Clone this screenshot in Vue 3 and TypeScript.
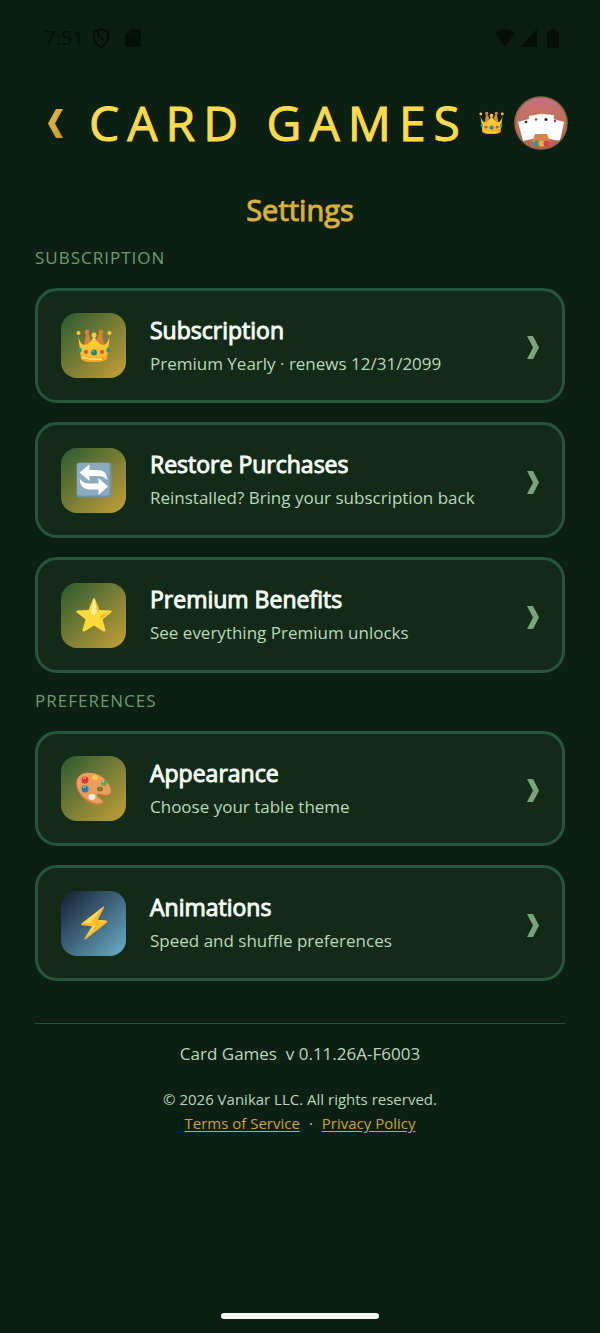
<script setup lang="ts">
interface SettingRow {
  icon: 'crown' | 'restore' | 'star' | 'palette' | 'bolt'
  title: string
  detail: string
}

interface SettingGroup {
  label: string
  rows: SettingRow[]
}

const groups: SettingGroup[] = [
  {
    label: 'SUBSCRIPTION',
    rows: [
      { icon: 'crown', title: 'Subscription', detail: 'Premium Yearly · renews 12/31/2099' },
      { icon: 'restore', title: 'Restore Purchases', detail: 'Reinstalled? Bring your subscription back' },
      { icon: 'star', title: 'Premium Benefits', detail: 'See everything Premium unlocks' },
    ],
  },
  {
    label: 'PREFERENCES',
    rows: [
      { icon: 'palette', title: 'Appearance', detail: 'Choose your table theme' },
      { icon: 'bolt', title: 'Animations', detail: 'Speed and shuffle preferences' },
    ],
  },
]
</script>

<template>
  <div class="page">
    <svg class="defs" width="0" height="0" aria-hidden="true">
      <defs>
        <linearGradient id="gold" x1="0" y1="0" x2="0" y2="1">
          <stop offset="0" stop-color="#ffd43a" />
          <stop offset="1" stop-color="#f8b52c" />
        </linearGradient>
        <linearGradient id="backGold" x1="0" y1="0" x2="1" y2="1">
          <stop offset="0" stop-color="#e5bd45" />
          <stop offset="1" stop-color="#c79a2c" />
        </linearGradient>
        <linearGradient id="avatarBg" x1="0" y1="0" x2="0" y2="1">
          <stop offset="0" stop-color="#c66f86" />
          <stop offset="0.4" stop-color="#c5705f" />
          <stop offset="1" stop-color="#b9664f" />
        </linearGradient>
        <clipPath id="avatarClip"><circle cx="27" cy="27" r="26" /></clipPath>
        <symbol id="crown" viewBox="0 0 36 34">
          <path d="M7 22 L10 5 L13 5 L17 20 L23 5 L26 5 L29 22Z" fill="#d9823c" />
          <circle cx="11" cy="3" r="2.3" fill="#d9823c" />
          <circle cx="25" cy="3" r="2.3" fill="#d9823c" />
          <path d="M2 5.500 C3 12 6 16 9 16 C13 15 17 11 17 7 H19 C19 11 23 15 27 16 C30 16 33 12 34 5.500 L31 29 Q30 33 18 33 Q6 33 5 29Z" fill="url(#gold)" />
          <path d="M5 26 Q18 31 31 26 L31 30 Q27 33 18 33 Q8 33 5 30Z" fill="#f4a92d" />
          <path d="M6 28 Q14 31 26 30" fill="none" stroke="#ffe56e" stroke-width="1.500" />
          <circle cx="2.500" cy="4" r="2" fill="#ffc940" />
          <circle cx="18" cy="6" r="2.500" fill="#ffc940" />
          <circle cx="33.500" cy="4" r="2" fill="#ffc940" />
          <ellipse cx="4" cy="21" rx="1.700" ry="2.500" fill="#199c8c" />
          <ellipse cx="32" cy="21" rx="1.700" ry="2.500" fill="#199c8c" />
          <circle cx="10" cy="23" r="2" fill="#e64c3c" />
          <circle cx="26" cy="23" r="2" fill="#e64c3c" />
          <circle cx="18" cy="23.500" r="3" fill="#128c80" />
          <circle cx="17" cy="22.500" r="1" fill="#50c4ad" />
        </symbol>
        <symbol id="restore" viewBox="0 0 36 36">
          <rect x="0.500" y="0.500" width="35" height="35" rx="3" fill="#6e93ac" />
          <rect x="1" y="1" width="32.500" height="32.500" rx="2.500" fill="#8aaabd" />
          <path d="M3.500 10.500 L13.500 2.500 V8 H22 Q31 8 31 18 Q28 14 22 14 H13.500 V19Z" fill="#fff" />
          <path d="M3.500 16.500 Q7 21.500 13 21.500 H22.500 V16 L32 24.500 L22.500 33 V27.500 H13 Q4 27 3.500 16.500Z" fill="#fff" />
        </symbol>
        <symbol id="star" viewBox="0 0 36 34">
          <path d="M17 1 Q18 -0.500 19 1 L23.500 12 L34.500 12.500 Q36.500 13 35 14.500 L26.500 21.500 L29.500 32 Q29.500 34 27.500 33.500 L18 27.500 L8.500 33.500 Q6.500 34 6.500 32 L9.500 21.500 L1 14.500 Q-0.500 13 1.500 12.500 L12.500 12Z" fill="#fddb3a" />
          <path d="M18 1 L22 13 L18 18 L15 14Z" fill="#fff394" />
          <path d="M19 1.500 L23 13 L21 14Z M34 13 L25 21 L24 18Z" fill="#f1b72b" />
        </symbol>
        <symbol id="palette" viewBox="0 0 36 34">
          <path d="M1 9 C3 -1 17 -1 26 5 C35 11 38 22 32 24 C29 26 25 22 22 23 C19 25 27 28 27 31 C25 35 15 33 9 28 C3 22 -1 16 1 9Z" fill="#c97938" />
          <path d="M1 8 C4 -1 17 -1 26 5 C34 11 38 21 32 22.500 C28 24 24 20 21 22 C19 25 27 27 27 30 C24 33 15 31 9 26 C3 21 0 15 1 8Z" fill="#eb9e5d" />
          <ellipse cx="24" cy="17" rx="3" ry="2.500" fill="#7e7931" />
          <circle cx="9" cy="8" r="3.500" fill="#dc3935" />
          <ellipse cx="19" cy="5.500" rx="3.200" ry="2.500" fill="#fccc3c" />
          <circle cx="28" cy="11" r="3" fill="#63a944" />
          <circle cx="9" cy="17" r="3.500" fill="#287bb9" />
          <ellipse cx="16" cy="25" rx="3.500" ry="3" fill="#f1eee8" />
          <path d="M7 7 Q8 5 10 6 M7 16 Q8 14 10 15 M26 10 L28 9" fill="none" stroke="#fff" stroke-opacity="0.700" />
        </symbol>
        <symbol id="bolt" viewBox="-1 -1 32 38">
          <path d="M24.500 1 Q26 -0.500 25.500 2 L19 14.500 L28 15.500 Q30 16 28 18 L6.500 35 Q4 37 5.500 33.500 L13 21.500 L2.500 20.500 Q0.500 20 2.500 18Z" fill="#fdbc2c" />
          <path d="M24.500 1 L3 18 L16 18 L12 17Z M19 15 L28 15.500 L24 17Z" fill="#ffdc59" />
          <path d="M5.500 34 L14 21 L16 21Z" fill="#ffe27a" />
        </symbol>
      </defs>
    </svg>

    <div class="status">
      <div class="status-group">
        <span class="clock">7:51</span>
        <svg width="18" height="20" viewBox="0 0 18 20" aria-hidden="true">
          <path d="M9 1 L16 3.500 V9 Q16 16 9 19 Q2 16 2 9 V3.500Z M6 3 V7 L13 13" fill="none" stroke="currentColor" stroke-width="2" />
        </svg>
        <svg class="sd" width="16" height="18" viewBox="0 0 16 18" aria-hidden="true">
          <path d="M6 0 H14 Q16 0 16 2 V16 Q16 18 14 18 H2 Q0 18 0 16 V6Z" fill="currentColor" />
          <path d="M6 3 V6 M9 3 V6 M12 3 V6" stroke="#0b1f13" />
        </svg>
      </div>
      <div class="status-group right">
        <svg width="20" height="18" viewBox="0 0 20 18" aria-hidden="true"><path d="M0 4 Q10 -4 20 4 L10 18Z" fill="currentColor" /></svg>
        <svg width="17" height="18" viewBox="0 0 17 18" aria-hidden="true"><path d="M17 0 V18 H0Z" fill="currentColor" /></svg>
        <svg class="battery" width="12" height="19" viewBox="0 0 12 19" aria-hidden="true"><path d="M3 0 H9 V2 Q12 2 12 4 V17 Q12 19 10 19 H2 Q0 19 0 17 V4 Q0 2 3 2Z" fill="currentColor" /></svg>
      </div>
    </div>

    <header class="top">
      <button class="back" type="button" aria-label="Back">
        <svg width="15" height="29" viewBox="0 0 15 29" aria-hidden="true">
          <path d="M8 0 H15 L7 14.500 L15 29 H8 L0 14.500Z" fill="url(#backGold)" />
        </svg>
      </button>
      <h1>CARD GAMES</h1>
      <svg class="top-crown" width="25" height="24" aria-hidden="true"><use href="#crown" /></svg>
      <button class="avatar" type="button" aria-label="Profile">
        <svg width="54" height="54" viewBox="0 0 54 54" aria-hidden="true">
          <g clip-path="url(#avatarClip)">
            <rect width="54" height="54" fill="url(#avatarBg)" />
            <path d="M14 22 Q27 10 40 22Z" fill="#c77d50" />
            <path d="M4 26 L18 22 L23 42 L9 45Z" fill="#fff" />
            <path d="M50 26 L36 22 L31 42 L46 45Z" fill="#fff" />
            <path d="M15 20 L27 18 L29 38 L17 40Z" fill="#fff" />
            <path d="M27 18 L40 19 L38 39 L26 38Z" fill="#fff" />
            <path d="M21 38 H33 L36 46 H18Z" fill="#d58348" />
            <circle cx="12" cy="26" r="1.300" fill="#231e22" />
            <circle cx="22" cy="23.500" r="1.200" fill="#c6283f" />
            <circle cx="32" cy="23.500" r="1.500" fill="#231e22" />
            <circle cx="41" cy="25" r="1.200" fill="#c6283f" />
            <path d="M19 54 L22 48 L25 54 L28 48 L31 54 L33 48 L37 54Z" fill="#d65245" />
            <circle cx="22.500" cy="47.500" r="3" fill="#3a9a89" />
            <circle cx="27.500" cy="47.500" r="3" fill="#f0b529" />
            <circle cx="32.500" cy="47.500" r="3" fill="#df3769" />
          </g>
          <circle cx="27" cy="27" r="26" fill="none" stroke="#8b6a48" stroke-width="1.500" />
        </svg>
      </button>
    </header>

    <main>
      <h2>Settings</h2>
      <section v-for="group in groups" :key="group.label">
        <h3>{{ group.label }}</h3>
        <div class="rows">
          <button v-for="row in group.rows" :key="row.title" class="row" type="button">
            <span class="tile" :class="row.icon">
              <svg width="36" height="36" aria-hidden="true"><use :href="'#' + row.icon" /></svg>
            </span>
            <span class="words">
              <span class="title">{{ row.title }}</span>
              <span class="detail">{{ row.detail }}</span>
            </span>
            <svg class="chevron" width="12" height="23" viewBox="0 0 12 23" aria-hidden="true">
              <path d="M0 0 H6 L12 11.500 L6 23 H0 L6 11.500Z" fill="#77a679" />
            </svg>
          </button>
        </div>
      </section>
    </main>

    <footer>
      <p class="version">Card Games&nbsp; v 0.11.26A-F6003</p>
      <p class="legal">© 2026 Vanikar LLC. All rights reserved.</p>
      <p class="legal"><a href="#terms">Terms of Service</a><span class="dot">·</span><a href="#privacy">Privacy Policy</a></p>
    </footer>

    <div class="home-bar"></div>
  </div>
</template>

<style>
body {
  margin: 0;
  background: #0b1f13;
}
</style>

<style scoped>
.page {
  box-sizing: border-box;
  display: flex;
  flex-direction: column;
  min-height: 100vh;
  padding: 0 35px;
  background: #0b1f13;
  color: #b9d9bb;
  font-family: "Open Sans", "Noto Sans", sans-serif;
}
.defs { position: absolute; }
h1, h2, h3, p { margin: 0; font-weight: 400; }
button {
  border: 0;
  padding: 0;
  background: none;
  color: inherit;
  font: inherit;
  cursor: pointer;
}
svg { display: block; flex: none; }
.status {
  display: flex;
  justify-content: space-between;
  height: 76px;
  padding: 0 6px 0 9px;
  color: #050f08;
}
.status-group { display: flex; align-items: center; gap: 8px; }
.status-group.right { gap: 5px; }
.sd { margin-left: 7px; }
.battery { margin-left: 5px; }
.clock { font-size: 20px; line-height: 24px; }
.top {
  display: flex;
  align-items: center;
  height: 94px;
  margin-right: -3px;
}
.back { padding: 8px 13px; }
h1 {
  flex: 1;
  min-width: 0;
  margin-left: 13px;
  color: #ffda4a;
  font-size: 48px;
  line-height: 64px;
  letter-spacing: 8px;
  white-space: nowrap;
  -webkit-text-stroke: 1px #ffda4a;
}
.avatar { margin-left: 10px; border-radius: 50%; }
h2 {
  margin-top: 18px;
  color: #d9b03c;
  font-size: 29px;
  line-height: 44px;
  text-align: center;
  -webkit-text-stroke: 1px #d9b03c;
}
h3 {
  padding: 14px 0 18px;
  color: #6d9c70;
  font-size: 17px;
  line-height: 24px;
  letter-spacing: 1px;
}
section + section h3 { padding-top: 16px; }
.rows { display: flex; flex-direction: column; gap: 19px; }
.row {
  display: flex;
  align-items: center;
  box-sizing: border-box;
  width: 100%;
  min-height: 115px;
  padding: 0 23px;
  border: 3px solid #28563a;
  border-radius: 22px;
  background: #132a18;
  text-align: left;
}
.row + .row { min-height: 116px; }
.tile {
  display: grid;
  place-items: center;
  flex: none;
  width: 65px;
  height: 65px;
  border-radius: 16px;
  background: linear-gradient(135deg, #2a5a32, #c5a038);
}
.tile.bolt { background: linear-gradient(135deg, #151d32, #6bb0c8); }
.words {
  display: flex;
  flex: 1;
  flex-direction: column;
  gap: 4px;
  min-width: 0;
  margin-left: 24px;
}
.title {
  color: #f2fbf3;
  font-size: 23px;
  line-height: 32px;
  -webkit-text-stroke: 1px #f2fbf3;
}
.detail { font-size: 17px; line-height: 28px; }
.chevron { margin-top: 4px; }
footer {
  margin-top: 42px;
  border-top: 1px solid #28503a;
  text-align: center;
}
.version { padding: 16px 0 19px; font-size: 17px; line-height: 28px; }
.legal { font-size: 15px; line-height: 24px; }
.legal a { color: #c9a53a; text-underline-offset: 2px; }
.dot { margin: 0 9px; }
.home-bar {
  width: 158px;
  height: 6px;
  margin: auto auto 14px;
  border-radius: 3px;
  background: #f3f7f3;
}
</style>
